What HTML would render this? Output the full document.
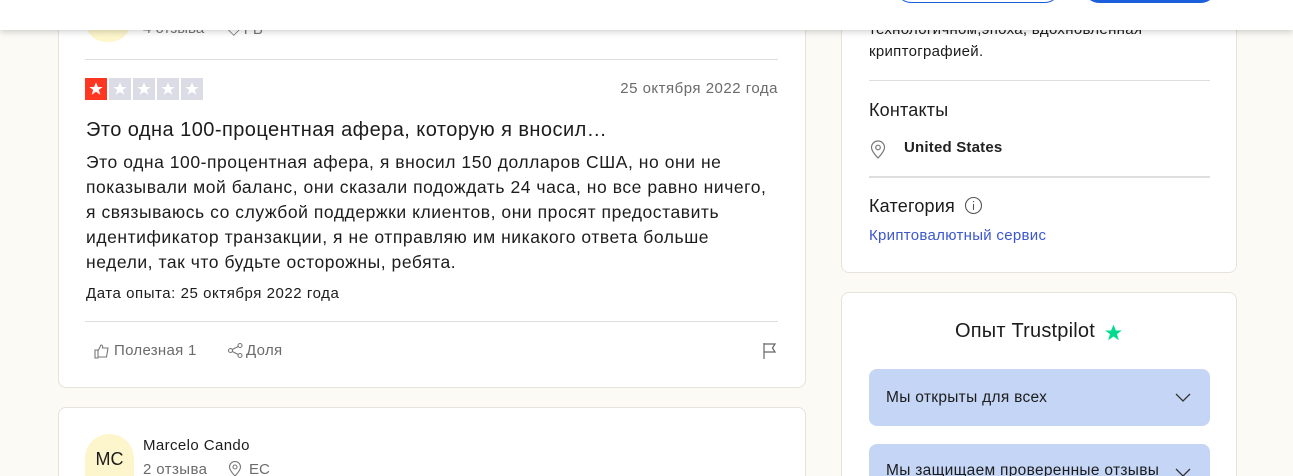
<!DOCTYPE html>
<html><head><meta charset="utf-8"><style>
*{margin:0;padding:0;box-sizing:border-box}
html,body{width:1293px;height:476px;overflow:hidden}
body{background:#fbfaf5;font-family:"Liberation Sans",Arial,sans-serif;color:#1c1c1c;position:relative}
.card{position:absolute;background:#fff;border:1px solid #e5e3dc;border-radius:8px}
.abs{position:absolute;white-space:nowrap}
.hr{position:absolute;height:1px;background:#dedede}
.star{position:absolute;top:78px;width:22px;height:22px;background:#dcdce6}
.star svg{position:absolute;left:3px;top:3px}
.acc{position:absolute;left:869px;width:341px;height:57px;background:#c4d5f5;border-radius:8px;font-size:15.5px;overflow:hidden}
</style></head><body>
<div class="card" style="left:58px;top:-20px;width:748px;height:408px"></div>
<div class="abs" style="left:85px;top:0;width:46px;height:42px;border-radius:23px;background:#fdf6cc"></div>
<div class="abs" style="left:143px;top:20px;font-size:15px;color:#777">4 отзыва</div>
<div class="abs" style="left:228px;top:20px;font-size:15px;color:#777">◇ FB</div>
<div class="hr" style="left:85px;top:59px;width:693px"></div>
<div class="star" style="left:85px;background:#ff3722"><svg width="16" height="16" viewBox="0 0 24 24"><path fill="#fff" d="M12 2l2.9 7h7.1l-5.8 4.4 2.2 7.3L12 16.2 5.6 20.7l2.2-7.3L2 9h7.1z"/></svg></div>
<div class="star" style="left:109px"><svg width="16" height="16" viewBox="0 0 24 24"><path fill="#fff" d="M12 2l2.9 7h7.1l-5.8 4.4 2.2 7.3L12 16.2 5.6 20.7l2.2-7.3L2 9h7.1z"/></svg></div>
<div class="star" style="left:133px"><svg width="16" height="16" viewBox="0 0 24 24"><path fill="#fff" d="M12 2l2.9 7h7.1l-5.8 4.4 2.2 7.3L12 16.2 5.6 20.7l2.2-7.3L2 9h7.1z"/></svg></div>
<div class="star" style="left:157px"><svg width="16" height="16" viewBox="0 0 24 24"><path fill="#fff" d="M12 2l2.9 7h7.1l-5.8 4.4 2.2 7.3L12 16.2 5.6 20.7l2.2-7.3L2 9h7.1z"/></svg></div>
<div class="star" style="left:181px"><svg width="16" height="16" viewBox="0 0 24 24"><path fill="#fff" d="M12 2l2.9 7h7.1l-5.8 4.4 2.2 7.3L12 16.2 5.6 20.7l2.2-7.3L2 9h7.1z"/></svg></div>
<div class="abs" style="right:515px;top:80px;font-size:15px;color:#6b6b6b;letter-spacing:.5px">25 октября 2022 года</div>
<div class="abs" style="left:86px;top:119px;font-size:20px;letter-spacing:.45px">Это одна 100-процентная афера, которую я вносил…</div>
<div class="abs" style="left:86px;top:150px;font-size:17.5px;line-height:25px;letter-spacing:.55px">Это одна 100-процентная афера, я вносил 150 долларов США, но они не<br>показывали мой баланс, они сказали подождать 24 часа, но все равно ничего,<br>я связываюсь со службой поддержки клиентов, они просят предоставить<br>идентификатор транзакции, я не отправляю им никакого ответа больше<br>недели, так что будьте осторожны, ребята.</div>
<div class="abs" style="left:86px;top:285px;font-size:15px;letter-spacing:.55px">Дата опыта: 25 октября 2022 года</div>
<div class="hr" style="left:85px;top:321px;width:693px"></div>
<svg class="abs" style="left:94px;top:343px" width="16" height="16" viewBox="0 0 16 16" fill="none" stroke="#777" stroke-width="1.1"><path d="M1 7h3v8H1zM4 8l3-6c1.5 0 2 1 1.5 3H14l-1.5 9H4"/></svg>
<div class="abs" style="left:114px;top:342px;font-size:15px;color:#6b6b6b;letter-spacing:.3px">Полезная 1</div>
<svg class="abs" style="left:227px;top:342px" width="17" height="17" viewBox="0 0 17 17" fill="none" stroke="#777" stroke-width="1.1"><circle cx="3.5" cy="8.5" r="2"/><circle cx="13" cy="3.5" r="2"/><circle cx="13" cy="13.5" r="2"/><path d="M5.3 7.5l5.9-3M5.3 9.5l5.9 3"/></svg>
<div class="abs" style="left:246px;top:342px;font-size:15px;color:#6b6b6b;letter-spacing:.3px">Доля</div>
<svg class="abs" style="left:762px;top:342px" width="16" height="17" viewBox="0 0 16 17" fill="none" stroke="#666" stroke-width="1.2"><path d="M2 1v16M2 2h11l-2.5 4L13 10H2"/></svg>
<div class="card" style="left:58px;top:407px;width:748px;height:69px;border-bottom:none;border-radius:8px 8px 0 0"></div>
<div class="abs" style="left:85px;top:434px;width:49px;height:42px;border-radius:25px 25px 0 0;background:#fdf6cc;font-size:18px;text-align:center;line-height:50px;overflow:hidden">MC</div>
<div class="abs" style="left:143px;top:437px;font-size:15px;letter-spacing:.4px">Marcelo Cando</div>
<div class="abs" style="left:143px;top:461px;font-size:15px;color:#6b6b6b;letter-spacing:.4px">2 отзыва</div>
<svg class="abs" style="left:228px;top:461px" width="14" height="15" viewBox="0 0 14 15" fill="none" stroke="#777" stroke-width="1.1"><path d="M7 15s-5.5-5.5-5.5-9a5.5 5.5 0 0111 0C12.5 9.5 7 15 7 15z"/><circle cx="7" cy="6" r="2"/></svg>
<div class="abs" style="left:249px;top:461px;font-size:15px;color:#6b6b6b">EC</div>
<div class="card" style="left:841px;top:-20px;width:396px;height:293px"></div>
<div class="abs" style="left:869px;top:21px;font-size:15px;letter-spacing:.3px">технологичном,эпоха, вдохновленная</div>
<div class="abs" style="left:869px;top:43px;font-size:15px;letter-spacing:.3px">криптографией.</div>
<div class="hr" style="left:869px;top:80px;width:341px"></div>
<div class="abs" style="left:869px;top:100px;font-size:18px;letter-spacing:.2px">Контакты</div>
<svg class="abs" style="left:870px;top:140px" width="16" height="19" viewBox="0 0 16 19" fill="none" stroke="#777" stroke-width="1.2"><path d="M8 18s-6.5-6.5-6.5-10.5a6.5 6.5 0 0113 0C14.5 11.5 8 18 8 18z"/><circle cx="8" cy="7.5" r="2.3"/></svg>
<div class="abs" style="left:904px;top:139px;font-size:15px;font-weight:bold;letter-spacing:.2px;color:#222">United States</div>
<div class="hr" style="left:869px;top:176px;width:341px;height:2px"></div>
<div class="abs" style="left:869px;top:196px;font-size:18px;letter-spacing:.2px">Категория</div>
<svg class="abs" style="left:964px;top:196px" width="19" height="19" viewBox="0 0 19 19" fill="none" stroke="#555" stroke-width="1.1"><circle cx="9.5" cy="9.5" r="8"/><path d="M9.5 8v6M9.5 5v1.3"/></svg>
<div class="abs" style="left:869px;top:227px;font-size:15px;color:#3c57cc;letter-spacing:.3px">Криптовалютный сервис</div>
<div class="card" style="left:841px;top:292px;width:396px;height:184px;border-bottom:none;border-radius:8px 8px 0 0"></div>
<div class="abs" style="left:955px;top:320px;font-size:20px;letter-spacing:.2px">Опыт Trustpilot</div>
<svg class="abs" style="left:1103px;top:323px" width="21" height="20" viewBox="0 0 24 24"><path fill="#04da8d" d="M12 2l2.9 7h7.1l-5.8 4.4 2.2 7.3L12 16.2 5.6 20.7l2.2-7.3L2 9h7.1z"/></svg>
<div class="acc" style="top:369px"><span class="abs" style="left:17px;top:20px;letter-spacing:.3px">Мы открыты для всех</span><svg class="abs" style="left:306px;top:24px" width="16" height="10" viewBox="0 0 16 10" fill="none" stroke="#333" stroke-width="1.3"><path d="M1 1l7 7 7-7"/></svg></div>
<div class="acc" style="top:444px;height:32px;border-radius:8px 8px 0 0"><span class="abs" style="left:17px;top:18px;letter-spacing:.3px">Мы защищаем проверенные отзывы</span><svg class="abs" style="left:306px;top:24px" width="16" height="8" viewBox="0 0 16 8" fill="none" stroke="#333" stroke-width="1.3"><path d="M1 1l7 7 7-7"/></svg></div>
<div class="abs" style="left:0;top:0;width:1293px;height:30px;background:#fff;box-shadow:0 2px 6px rgba(0,0,0,.18)"></div>
<div class="abs" style="left:895px;top:-30px;width:166px;height:33px;border:1.5px solid #1b5fdb;border-radius:17px;background:#fff"></div>
<div class="abs" style="left:1083px;top:-30px;width:134px;height:33px;border-radius:17px;background:#1b5fdb"></div>
</body></html>
